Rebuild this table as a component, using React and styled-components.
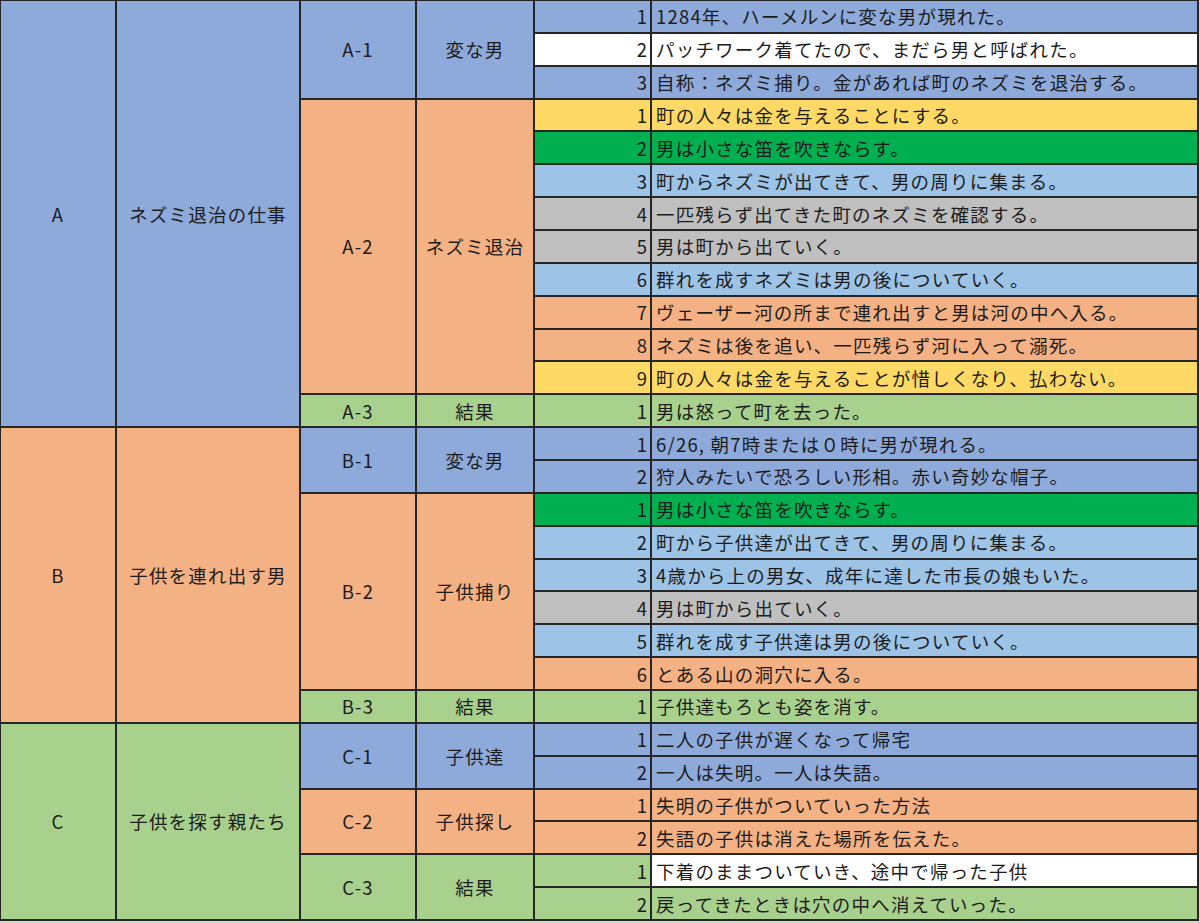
import React from 'react';
import styled, { createGlobalStyle } from 'styled-components';

const palette = {
  blue: '#8eaadb',
  orange: '#f4b183',
  green: '#a9d18e',
  yellow: '#ffd966',
  lime: '#00b050',
  sky: '#9dc3e6',
  gray: '#bfbfbf',
  white: '#ffffff',
};

const GlobalStyle = createGlobalStyle`
  html, body {
    margin: 0;
    padding: 0;
    background: #d6d6d6;
  }
  body {
    font-family: "Noto Sans CJK JP", "Noto Sans", sans-serif;
    color: #1c1c1c;
  }
`;

const Sheet = styled.div`
  width: 1199px;
  box-sizing: border-box;
  display: flex;
  flex-direction: column;
  border-top: 1px solid #262626;
  border-left: 1px solid #262626;
  font-size: 18.5px;
  letter-spacing: 1.2px;
`;

const Group = styled.div`
  display: flex;
`;

const Cell = styled.div`
  box-sizing: border-box;
  width: ${p => p.w}px;
  flex: none;
  display: flex;
  align-items: center;
  justify-content: center;
  background: ${p => palette[p.bg]};
  border-right: 2px solid #262626;
  border-bottom: 2px solid #262626;
  white-space: nowrap;
`;

const SubList = styled.div`
  flex: 1;
  display: flex;
  flex-direction: column;
`;

const Sub = styled.div`
  display: flex;
`;

const Lines = styled.div`
  flex: 1;
  display: flex;
  flex-direction: column;
`;

const Line = styled.div`
  display: flex;
  height: 32.86px;
`;

const Num = styled(Cell)`
  justify-content: flex-end;
  padding-right: 3px;
  letter-spacing: 0;
`;

const Text = styled(Cell)`
  flex: 1;
  justify-content: flex-start;
  padding-left: 4px;
`;

const data = [
  {
    key: 'A', name: 'ネズミ退治の仕事', bg: 'blue',
    subs: [
      { code: 'A-1', name: '変な男', bg: 'blue', lines: [
        ['1284年、ハーメルンに変な男が現れた。', 'blue'],
        ['パッチワーク着てたので、まだら男と呼ばれた。', 'white'],
        ['自称：ネズミ捕り。金があれば町のネズミを退治する。', 'blue'],
      ] },
      { code: 'A-2', name: 'ネズミ退治', bg: 'orange', lines: [
        ['町の人々は金を与えることにする。', 'yellow'],
        ['男は小さな笛を吹きならす。', 'lime'],
        ['町からネズミが出てきて、男の周りに集まる。', 'sky'],
        ['一匹残らず出てきた町のネズミを確認する。', 'gray'],
        ['男は町から出ていく。', 'gray'],
        ['群れを成すネズミは男の後についていく。', 'sky'],
        ['ヴェーザー河の所まで連れ出すと男は河の中へ入る。', 'orange'],
        ['ネズミは後を追い、一匹残らず河に入って溺死。', 'orange'],
        ['町の人々は金を与えることが惜しくなり、払わない。', 'yellow'],
      ] },
      { code: 'A-3', name: '結果', bg: 'green', lines: [
        ['男は怒って町を去った。', 'green'],
      ] },
    ],
  },
  {
    key: 'B', name: '子供を連れ出す男', bg: 'orange',
    subs: [
      { code: 'B-1', name: '変な男', bg: 'blue', lines: [
        ['6/26, 朝7時または０時に男が現れる。', 'blue'],
        ['狩人みたいで恐ろしい形相。赤い奇妙な帽子。', 'blue'],
      ] },
      { code: 'B-2', name: '子供捕り', bg: 'orange', lines: [
        ['男は小さな笛を吹きならす。', 'lime'],
        ['町から子供達が出てきて、男の周りに集まる。', 'sky'],
        ['4歳から上の男女、成年に達した市長の娘もいた。', 'sky'],
        ['男は町から出ていく。', 'gray'],
        ['群れを成す子供達は男の後についていく。', 'sky'],
        ['とある山の洞穴に入る。', 'orange'],
      ] },
      { code: 'B-3', name: '結果', bg: 'green', lines: [
        ['子供達もろとも姿を消す。', 'green'],
      ] },
    ],
  },
  {
    key: 'C', name: '子供を探す親たち', bg: 'green',
    subs: [
      { code: 'C-1', name: '子供達', bg: 'blue', lines: [
        ['二人の子供が遅くなって帰宅', 'blue'],
        ['一人は失明。一人は失語。', 'blue'],
      ] },
      { code: 'C-2', name: '子供探し', bg: 'orange', lines: [
        ['失明の子供がついていった方法', 'orange'],
        ['失語の子供は消えた場所を伝えた。', 'orange'],
      ] },
      { code: 'C-3', name: '結果', bg: 'green', lines: [
        ['下着のままついていき、途中で帰った子供', 'white', 'green'],
        ['戻ってきたときは穴の中へ消えていった。', 'green'],
      ] },
    ],
  },
];

export default function App() {
  return (
    <>
      <GlobalStyle />
      <Sheet>
        {data.map(g => (
          <Group key={g.key}>
            <Cell w={116} bg={g.bg}>{g.key}</Cell>
            <Cell w={184} bg={g.bg}>{g.name}</Cell>
            <SubList>
              {g.subs.map(s => (
                <Sub key={s.code}>
                  <Cell w={116} bg={s.bg}>{s.code}</Cell>
                  <Cell w={118} bg={s.bg}>{s.name}</Cell>
                  <Lines>
                    {s.lines.map(([text, bg, numBg], i) => (
                      <Line key={i}>
                        <Num w={117} bg={numBg || bg}>{i + 1}</Num>
                        <Text bg={bg}>{text}</Text>
                      </Line>
                    ))}
                  </Lines>
                </Sub>
              ))}
            </SubList>
          </Group>
        ))}
      </Sheet>
    </>
  );
}
